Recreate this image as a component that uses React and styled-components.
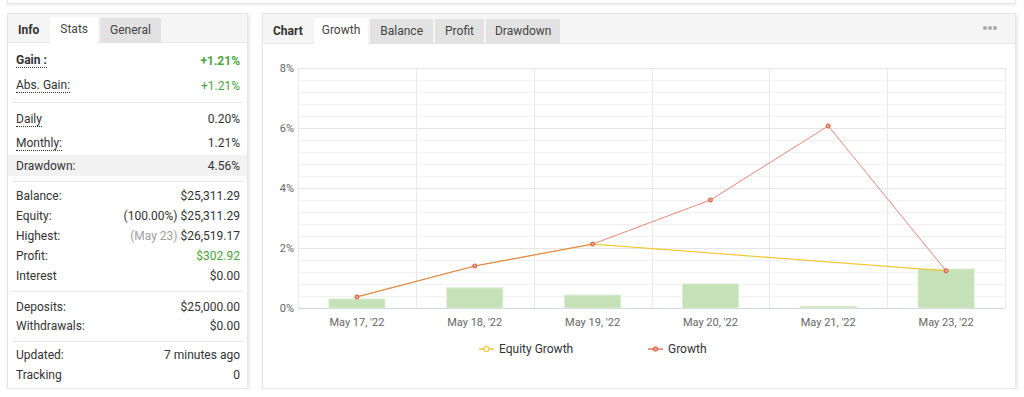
import React from 'react';
import styled, { createGlobalStyle } from 'styled-components';

const GlobalStyle = createGlobalStyle`
  body {
    margin: 0;
    background: #fff;
    font-family: Roboto, "Liberation Sans", Arial, sans-serif;
    color: #333;
  }
`;

const stats = [
  {
    pad: '5px 0 4px',
    rows: [
      { label: 'Gain :', value: '+1.21%', strong: true, tip: true, green: true, h: 25 },
      { label: 'Abs. Gain:', value: '+1.21%', tip: true, green: true, h: 25 },
    ],
  },
  {
    pad: '4px 0 5px',
    rows: [
      { label: 'Daily', value: '0.20%', tip: true, h: 24 },
      { label: 'Monthly:', value: '1.21%', tip: true, h: 24 },
      { label: 'Drawdown:', value: '4.56%', shade: true, h: 21 },
    ],
  },
  {
    pad: '4px 0 5px',
    rows: [
      { label: 'Balance:', value: '$25,311.29' },
      { label: 'Equity:', value: '$25,311.29', note: '(100.00%)' },
      { label: 'Highest:', value: '$26,519.17', note: '(May 23)', muted: true },
      { label: 'Profit:', value: '$302.92', green: true },
      { label: 'Interest', value: '$0.00' },
    ],
  },
  {
    pad: '5px 0',
    rows: [
      { label: 'Deposits:', value: '$25,000.00', h: 19.5 },
      { label: 'Withdrawals:', value: '$0.00', h: 19.5 },
    ],
  },
  {
    pad: '3px 0',
    rows: [
      { label: 'Updated:', value: '7 minutes ago' },
      { label: 'Tracking', value: '0' },
    ],
  },
];

const days = [
  { label: "May 17, '22", bar: 0.3, growth: 0.37, equity: 0.37 },
  { label: "May 18, '22", bar: 0.67, growth: 1.4, equity: 1.4 },
  { label: "May 19, '22", bar: 0.43, growth: 2.13, equity: 2.13 },
  { label: "May 20, '22", bar: 0.8, growth: 3.6 },
  { label: "May 21, '22", bar: 0.05, growth: 6.07 },
  { label: "May 23, '22", bar: 1.3, growth: 1.24, equity: 1.24 },
];

// chart geometry, local to the svg
const X0 = 35;
const X1 = 742;
const Y0 = 264;
const PER = 30;
const col = (X1 - X0) / days.length;
const cx = (i) => X0 + col * i + col / 2;
const cy = (v) => Y0 - v * PER;

export default function App() {
  return (
    <>
      <GlobalStyle />
      <Page>
        <TopStrip />
        <Row>
          <Panel $width={241}>
            <Header>
              <Title>Info</Title>
              <Tab $active>Stats</Tab>
              <Tab>General</Tab>
            </Header>
            {stats.map((section, si) => (
              <React.Fragment key={si}>
                {si > 0 && <Divider />}
                <Section $pad={section.pad}>
                  {section.rows.map((r) => (
                    <StatRow key={r.label} $h={r.h || 20} $shade={r.shade}>
                      <Label $tip={r.tip} $strong={r.strong}>{r.label}</Label>
                      <Value $green={r.green} $strong={r.strong}>
                        {r.note && <Note $muted={r.muted}>{r.note}</Note>}
                        {r.value}
                      </Value>
                    </StatRow>
                  ))}
                </Section>
              </React.Fragment>
            ))}
          </Panel>
          <Panel $width={754}>
            <Header>
              <Title>Chart</Title>
              <Tab $active $pad={8}>Growth</Tab>
              <Tab>Balance</Tab>
              <Tab>Profit</Tab>
              <Tab $pad={9}>Drawdown</Tab>
              <More>
                <svg width="16" height="6" viewBox="0 0 16 6">
                  <circle cx="3" cy="3" r="2.1" fill="#aaa" />
                  <circle cx="8" cy="3" r="2.1" fill="#aaa" />
                  <circle cx="13" cy="3" r="2.1" fill="#aaa" />
                </svg>
              </More>
            </Header>
            <ChartBody>
              <GrowthChart />
            </ChartBody>
          </Panel>
        </Row>
      </Page>
    </>
  );
}

const GrowthChart = () => {
  const minor = [];
  for (let v = 0; v <= 8.001; v += 0.4) minor.push(Number(v.toFixed(1)));
  const growthPts = days.map((d, i) => `${cx(i)},${cy(d.growth)}`).join(' ');
  const equityPts = days
    .map((d, i) => (d.equity != null ? `${cx(i)},${cy(d.equity)}` : null))
    .filter(Boolean)
    .join(' ');

  return (
    <svg width="752" height="344" viewBox="0 0 752 344">
      {minor.map((v) => (
        <line
          key={v}
          x1={X0}
          x2={X1}
          y1={cy(v) + 0.5}
          y2={cy(v) + 0.5}
          stroke={Math.abs(v % 2) < 0.01 ? '#e6e6e6' : '#f2f2f2'}
        />
      ))}
      {Array.from({ length: days.length + 1 }, (_, i) => (
        <line
          key={i}
          x1={Math.round(X0 + col * i) + 0.5}
          x2={Math.round(X0 + col * i) + 0.5}
          y1={cy(8)}
          y2={Y0}
          stroke="#e9e9e9"
        />
      ))}
      <line x1={X0} x2={X1} y1={Y0 + 0.5} y2={Y0 + 0.5} stroke="#ccd6eb" />
      {[0, 2, 4, 6, 8].map((v) => (
        <text key={v} x={X0 - 4} y={cy(v) + 4} textAnchor="end" fontSize="11" fill="#666">
          {v}%
        </text>
      ))}
      {days.map((d, i) => (
        <rect
          key={d.label}
          x={cx(i) - 28}
          y={cy(d.bar)}
          width="56"
          height={Y0 - cy(d.bar)}
          fill="#c5e1b7"
          stroke="#d9ecd0"
          strokeWidth="1"
        />
      ))}
      {days.map((d, i) => (
        <text key={d.label} x={cx(i)} y={Y0 + 18} textAnchor="middle" fontSize="11" fill="#666">
          {d.label}
        </text>
      ))}
      <polyline points={equityPts} fill="none" stroke="#f2c838" strokeWidth="1.2" />
      <polyline points={growthPts} fill="none" stroke="#e0735e" strokeWidth="1" opacity="0.85" />
      {days.map((d, i) => (
        <circle key={d.label} cx={cx(i)} cy={cy(d.growth)} r="2" fill="#f3a08a" stroke="#d6553c" strokeWidth="1" />
      ))}
      <g fontSize="12" fill="#333">
        <line x1="216" x2="231" y1="305" y2="305" stroke="#f2c838" strokeWidth="1.5" />
        <circle cx="223.5" cy="305" r="2.5" fill="#fff" stroke="#f2c838" strokeWidth="1.2" />
        <text x="236" y="309">Equity Growth</text>
        <line x1="385" x2="400" y1="305" y2="305" stroke="#e2745f" strokeWidth="1.5" />
        <circle cx="392.5" cy="305" r="2.2" fill="#f3a08a" stroke="#d6553c" strokeWidth="1" />
        <text x="405" y="309">Growth</text>
      </g>
    </svg>
  );
};

const Page = styled.div`
  padding: 0 8px 0 7px;
  width: 1009px;
`;

const TopStrip = styled.div`
  height: 3px;
  border: 1px solid #e8e8e8;
  border-top: none;
  box-shadow: 0 1px 3px rgba(0, 0, 0, 0.1);
`;

const Row = styled.div`
  display: flex;
  gap: 14px;
  margin-top: 9px;
  align-items: flex-start;
`;

const Panel = styled.section`
  box-sizing: border-box;
  width: ${(p) => p.$width}px;
  height: 376px;
  border: 1px solid #e6e6e6;
  background: #fff;
  box-shadow: 1px 2px 4px rgba(0, 0, 0, 0.12);
  display: flex;
  flex-direction: column;
`;

const Header = styled.div`
  display: flex;
  align-items: flex-end;
  height: 29px;
  background: #f5f5f5;
  border-bottom: 1px solid #e8e8e8;
  font-size: 12px;
`;

const Title = styled.div`
  align-self: center;
  padding: 0 11px 0 10px;
  font-weight: 700;
  color: #333;
  margin-top: 4px;
`;

const Tab = styled.div`
  height: 25px;
  line-height: 25px;
  padding: 0 ${(p) => p.$pad ?? 10}px;
  margin-right: 2px;
  margin-bottom: -1px;
  background: ${(p) => (p.$active ? '#fff' : '#e2e2e2')};
  color: #444;
  ${(p) => p.$active && 'height: 26px;'}
`;

const More = styled.div`
  margin-left: auto;
  align-self: center;
  padding-right: 17px;
  display: flex;
  margin-top: -1px;
`;

const Section = styled.div`
  padding: ${(p) => p.$pad};
`;

const Divider = styled.div`
  height: 1px;
  margin: 0 4px;
  background: #e8e8e8;
`;

const StatRow = styled.div`
  display: flex;
  align-items: center;
  justify-content: space-between;
  height: ${(p) => p.$h}px;
  padding: 0 7px 0 8px;
  font-size: 12px;
  background: ${(p) => (p.$shade ? '#f2f2f2' : 'transparent')};
`;

const Label = styled.span`
  color: #333;
  font-weight: ${(p) => (p.$strong ? 700 : 400)};
  ${(p) => p.$tip && 'border-bottom: 1px dotted #333; line-height: 14px;'}
`;

const Value = styled.span`
  color: ${(p) => (p.$green ? '#4aa33c' : '#333')};
  font-weight: ${(p) => (p.$strong ? 700 : 400)};
`;

const Note = styled.span`
  color: ${(p) => (p.$muted ? '#a0a0a0' : '#333')};
  margin-right: 3px;
`;

const ChartBody = styled.div`
  flex: 1;
  display: flex;
`;
